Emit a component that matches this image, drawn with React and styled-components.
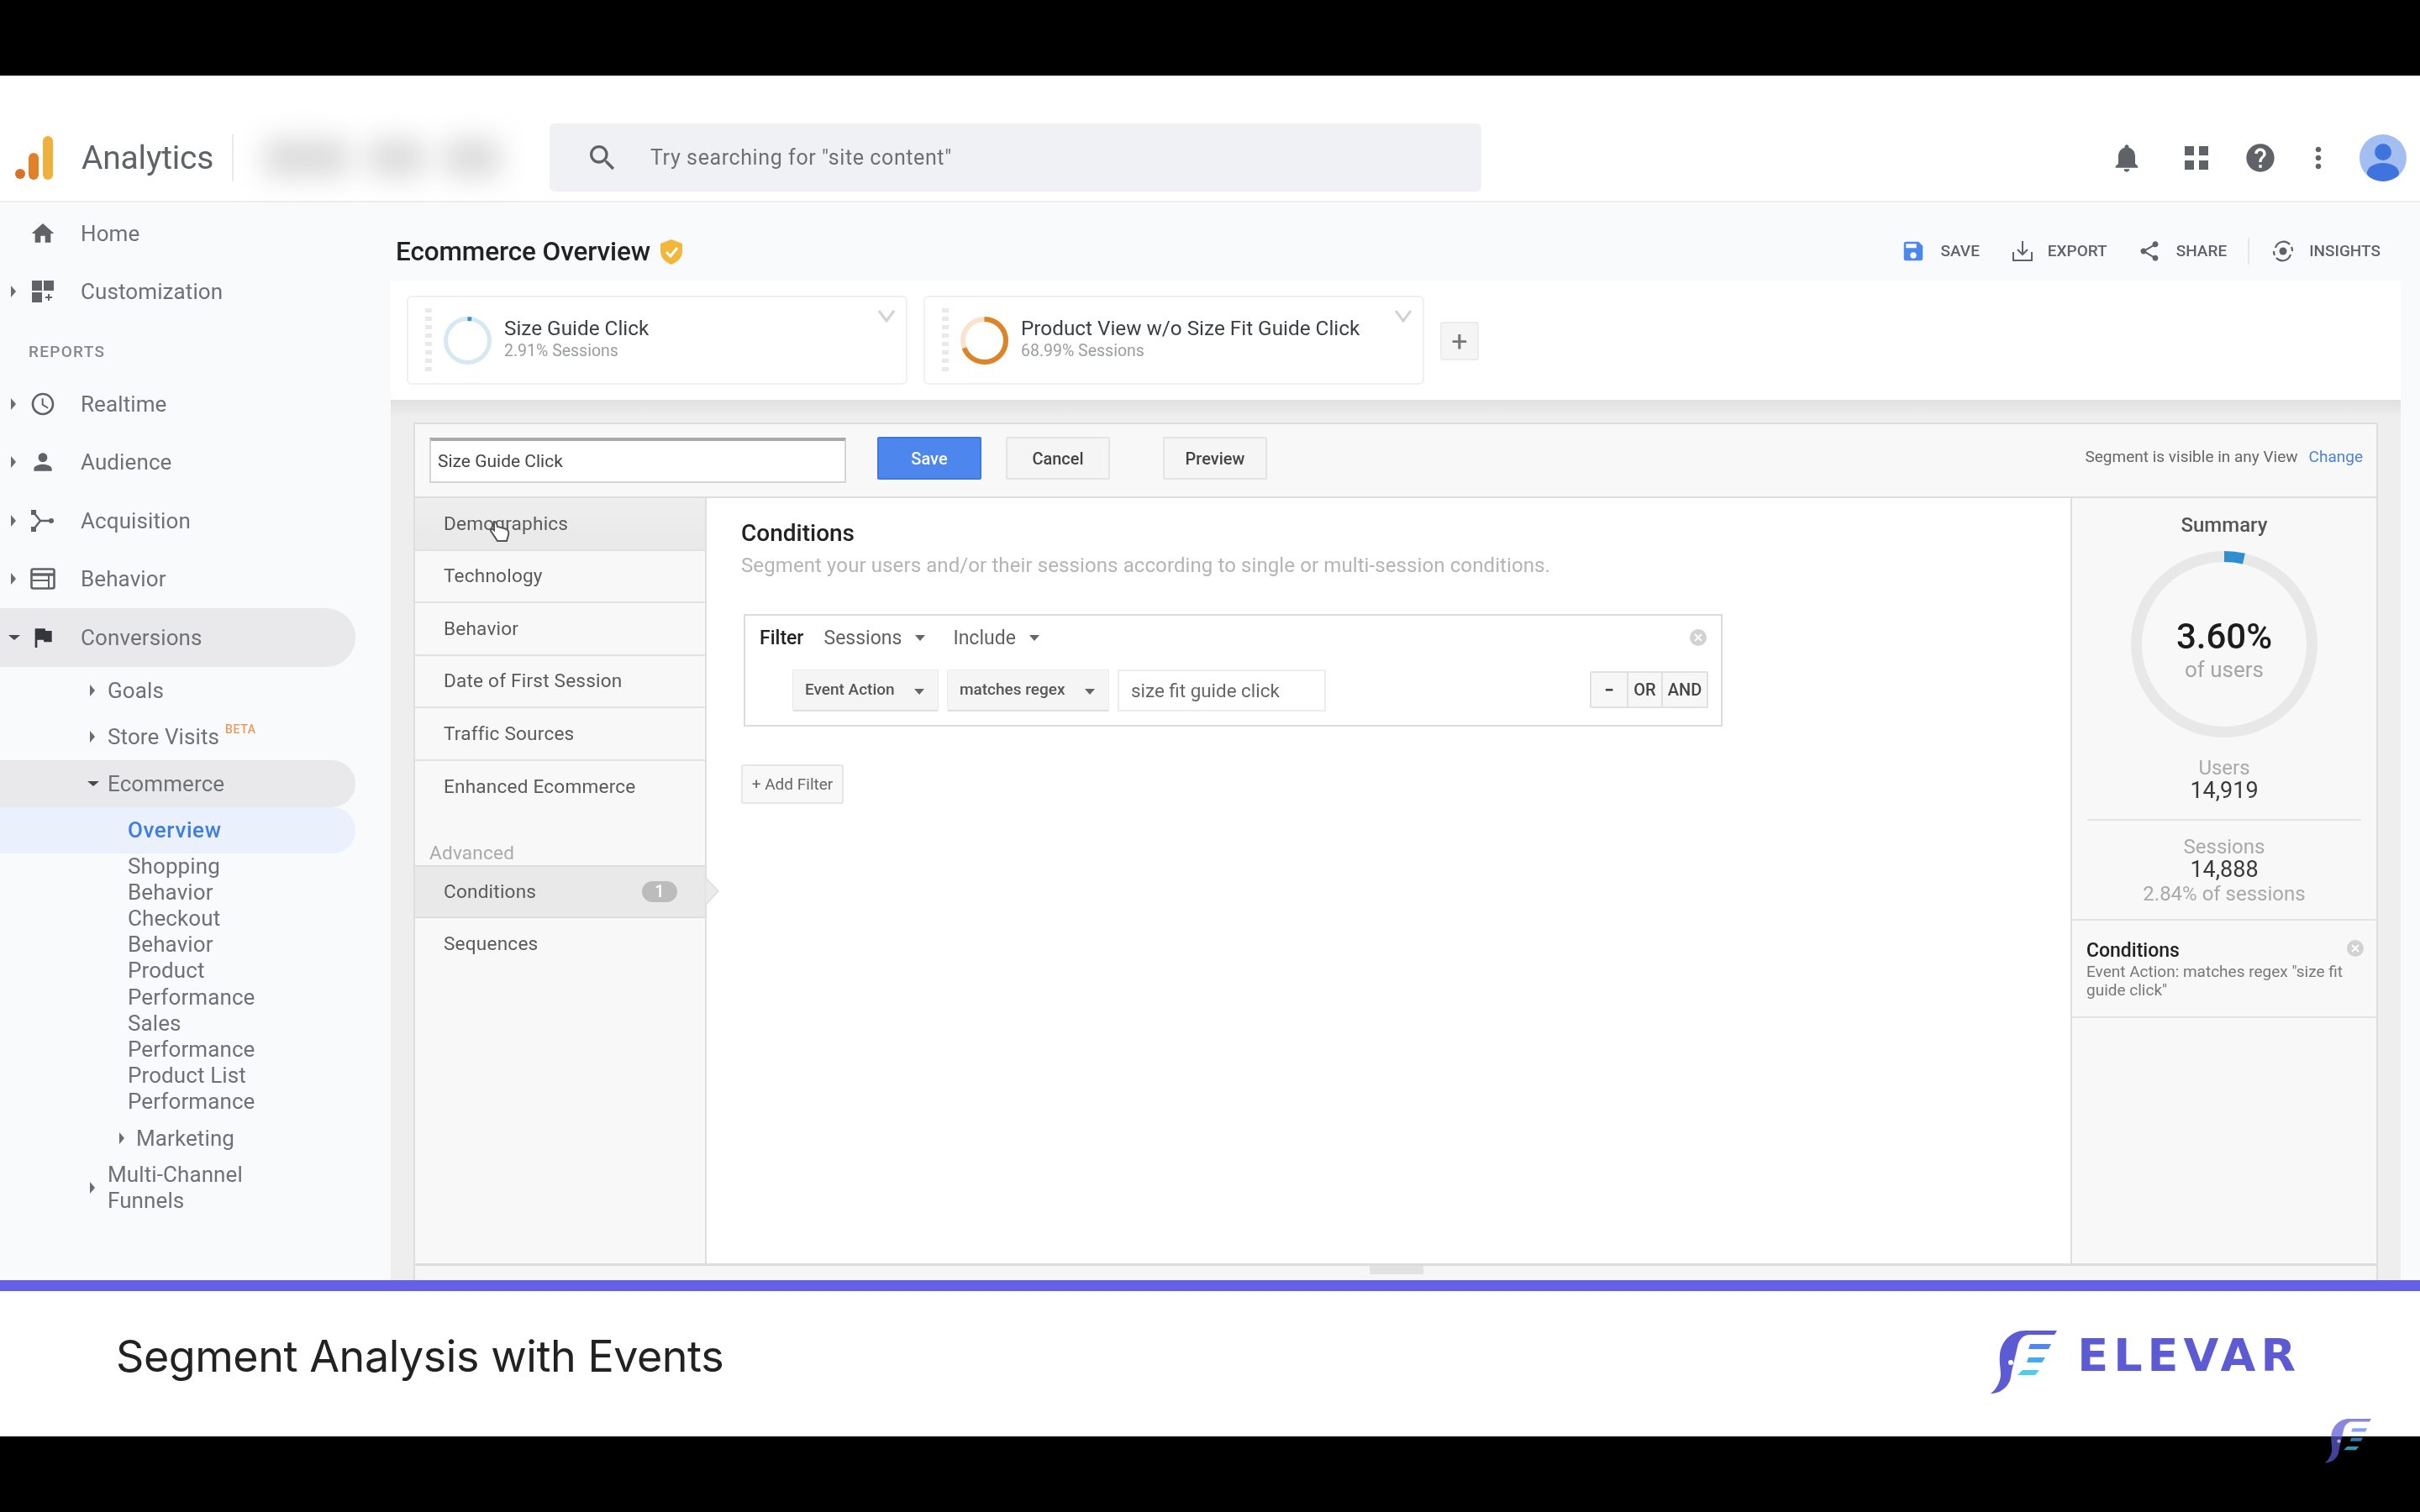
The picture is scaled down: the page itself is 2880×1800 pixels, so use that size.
import React from "react";
import styled, { createGlobalStyle } from "styled-components";
import { MdHome, MdPerson, MdFlag, MdNotifications, MdHelp, MdMoreVert, MdSearch, MdSave, MdShare, MdAccessTime } from "react-icons/md";

const Global = createGlobalStyle`
  html, body { margin: 0; padding: 0; background: #000; }
  * { box-sizing: border-box; }
`;
const Page = styled.div`
  position: relative; width: 2880px; height: 1800px; background: #000; overflow: hidden;
  display: flex; flex-direction: column; font-family: Roboto, "Liberation Sans", sans-serif;
`;
const Band = styled.div`height: 90px; background: #000; flex: none;`;
const Screen = styled.div`flex: none; height: 1434px; display: flex; flex-direction: column; background: #f9fafb; filter: blur(0.6px);`;
const Header = styled.header`
  flex: none; height: 151px; background: #fff; border-bottom: 2px solid #eceef0;
  display: flex; align-items: center; padding: 46px 16px 0 18px;
`;
const BrandName = styled.div`font-size: 39px; color: #5f6368; margin-left: 34px; width: 151px; letter-spacing: -0.2px;`;
const HeadDivider = styled.div`width: 2px; height: 56px; background: #e8eaed; margin-left: 28px;`;
const Redacted = styled.div`
  width: 310px; height: 70px; margin-left: 22px; display: flex; gap: 22px; align-items: center; padding: 0 14px; filter: blur(16px);
`;
const RedactedBlob = styled.div`height: 46px; flex: ${p => p.$grow}; background: #dcdcdc; border-radius: 10px;`;
const Search = styled.div`
  width: 1109px; height: 81px; margin-left: 44px; background: #f0f1f4; border-radius: 6px;
  display: flex; align-items: center; padding-left: 43px; color: #6d7074; font-size: 25px; letter-spacing: .6px;
  svg { font-size: 40px; color: #5f6368; margin-right: 37px; }
`;
const HeadIcons = styled.div`margin-left: auto; display: flex; align-items: center;`;
const HeadIcon = styled.div`
  width: 40px; height: 40px; margin-left: ${p => p.$gap}px; display: flex; align-items: center; justify-content: center; color: #5f6368;
  svg { display: block; }
`;
const Avatar = styled.div`
  width: 56px; height: 56px; margin-left: 29px; border-radius: 50%; background: #a3bff2; overflow: hidden;
  svg { display: block; }
`;
const Body = styled.div`flex: 1; display: flex; min-height: 0;`;
const Sidebar = styled.nav`flex: none; width: 465px; padding-top: 2px; background: #f9fafc; color: #6e7276; font-size: 26px; letter-spacing: .1px;`;
const NavRow = styled.div`
  position: relative; height: 69.5px; display: flex; align-items: center; padding-left: 96px; width: 423px;
  border-radius: 0 35px 35px 0; background: ${p => p.$active ? "#e9e9ec" : "transparent"};
`;
const NavIcon = styled.span`
  position: absolute; left: 35px; width: 32px; height: 32px; display: flex; align-items: center; justify-content: center;
  color: ${p => p.$dark ? "#33363a" : "#5f6368"};
  svg { display: block; }
`;
const Tri = styled.span`
  position: absolute; left: ${p => p.$x}px; width: 0; height: 0;
  ${p => p.$open
    ? "border-left: 7px solid transparent; border-right: 7px solid transparent; border-top: 6px solid #45484c;"
    : "border-top: 7px solid transparent; border-bottom: 7px solid transparent; border-left: 6px solid #6a6d70;"}
`;
const ReportsLabel = styled.div`height: 64px; padding: 25px 0 0 34px; font-size: 19px; font-weight: 500; letter-spacing: 1.3px; color: #85888c; line-height: 24px;`;
const SubRow = styled.div`
  position: relative; height: ${p => p.$h}px; display: flex; align-items: center; padding-left: ${p => p.$pad}px; width: 423px;
  border-radius: 0 28px 28px 0; background: ${p => p.$bg || "transparent"}; color: ${p => p.$color || "inherit"};
  font-weight: ${p => p.$strong ? 500 : 400}; letter-spacing: ${p => p.$strong ? ".6px" : "inherit"};
`;
const Beta = styled.sup`font-size: 14px; color: #e99a5d; font-weight: 500; letter-spacing: .6px; margin-left: 7px; position: relative; top: -9px; line-height: 0; vertical-align: baseline;`;
const Leaves = styled.div`padding-left: 152px; line-height: 31.2px;`;
const Wrapped = styled.div`line-height: 31px;`;
const Main = styled.main`flex: 1; min-width: 0; display: flex; flex-direction: column; padding-right: 23px;`;
const TitleRow = styled.div`height: 93px; flex: none; display: flex; align-items: center; padding: 24px 47px 0 6px; margin-right: -23px;`;
const Title = styled.h1`margin: 0; font-size: 31.5px; font-weight: 500; color: #222; letter-spacing: -.1px;`;
const Badge2 = styled.svg`margin-left: 12px; flex: none;`;
const Actions = styled.div`margin-left: auto; margin-top: -2px; display: flex; align-items: center; color: #5f6368; font-size: 19px; font-weight: 500;`;
const Action = styled.div`
  display: flex; align-items: center; gap: 18px; margin-left: ${p => p.$gap}px;
  svg { display: block; }
`;
const ActionSep = styled.div`width: 2px; height: 32px; background: #e6e7e9; margin-left: 25px;`;
const SegBand = styled.div`flex: none; height: 142px; background: #fff; display: flex; align-items: flex-start; padding: 18px 0 0 19px;`;
const SegCard = styled.div`
  position: relative; width: 596px; height: 106px; margin-right: 19px; background: #fff; border: 2px solid #f0f0f0; border-radius: 6px;
  display: flex; align-items: center; padding-left: 20px;
`;
const Grip = styled.div`width: 8px; height: 76px; background: repeating-linear-gradient(#e9e9e9 0 5px, transparent 5px 10px); margin-right: 14px;`;
const SegText = styled.div`margin-left: 15px; margin-top: -4px;`;
const SegName = styled.div`font-size: 24.3px; color: #3c4043; line-height: 30px;`;
const SegSub = styled.div`font-size: 19.5px; color: #9a9da0; line-height: 24px;`;
const SegChevron = styled.svg`position: absolute; right: 12px; top: 14px;`;
const AddSeg = styled.div`
  width: 46px; height: 46px; margin-top: 31px; background: #f5f5f5; border: 2px solid #ececec; border-radius: 3px;
  display: flex; align-items: center; justify-content: center; font-size: 34px; color: #777; line-height: 1;
`;
const Stage = styled.div`flex: 1; min-height: 0; padding: 27px 27px 0 27px; background: linear-gradient(#e0e0e0 0, #eeeeee 20px, #eeeeee 100%); display: flex;`;
const Panel = styled.div`flex: 1; min-width: 0; background: #f8f8f8; border: 2px solid #dedede; border-bottom: 0; display: flex; flex-direction: column;`;
const PanelTop = styled.div`
  flex: none; height: 88px; border-bottom: 2px solid #dedede; display: flex; align-items: center; padding-left: 17px; padding-right: 16px;
`;
const NameInput = styled.div`
  width: 496px; height: 54px; background: #fff; border: 2px solid #d4d4d4; border-top: 4px solid #a9a9a9; border-radius: 1px;
  display: flex; align-items: center; padding-left: 8px; font-size: 21px; color: #444;
`;
const Btn = styled.div`
  width: ${p => p.$w}px; height: 51px; margin-left: ${p => p.$gap}px; margin-top: -5px; border-radius: 2px; display: flex; align-items: center; justify-content: center;
  font-size: 20px; font-weight: 500; color: ${p => p.$primary ? "#fff" : "#444"};
  background: ${p => p.$primary ? "#4d87ee" : "#f5f5f5"}; border: 2px solid ${p => p.$primary ? "#3f78e0" : "#e4e4e4"};
`;
const Visible = styled.div`margin-left: auto; font-size: 19px; color: #666; margin-top: -9px;`;
const ChangeLink = styled.span`color: #4b83d6; margin-left: 13px;`;
const PanelBody = styled.div`flex: 1; min-height: 0; display: flex;`;
const List = styled.div`position: relative; flex: none; width: 347px; border-right: 2px solid #dedede; font-size: 22.6px; color: #5a5a5a; letter-spacing: .2px;`;
const ListItem = styled.div`
  height: 62.5px; display: flex; align-items: center; padding: 0 35px 0 34px; border-bottom: ${p => p.$plain ? "0" : "2px solid #e2e2e2"};
  background: ${p => p.$hover ? "linear-gradient(#eeeeee,#e9e9e9)" : p.$active ? "#e9e9e9" : "transparent"};
  ${p => p.$active ? "border-top: 2px solid #dedede; border-bottom: 2px solid #dedede;" : ""}
`;
const AdvLabel = styled.div`height: 62px; display: flex; align-items: flex-end; padding: 0 0 1px 17px; color: #aaa;`;
const Badge = styled.span`margin-left: auto; width: 42px; height: 25px; margin-right: -2px; border-radius: 13px; background: #bcbcbc; color: #fff; font-size: 20px; text-align: center; line-height: 25px; font-weight: 500;`;
const ListArrow = styled.svg`position: absolute; right: -18px; top: 451px;`;
const HandCursor = styled.svg`position: absolute; left: 88px; top: 26px;`;
const Center = styled.div`flex: 1; min-width: 0; background: #fff; padding: 27px 0 0 41px;`;
const CondTitle = styled.h2`margin: 0; font-size: 28px; line-height: 30px; font-weight: 500; color: #222;`;
const CondDesc = styled.p`margin: 8px 0 0; font-size: 24px; line-height: 30px; color: #b4b4b4; letter-spacing: .1px;`;
const FilterBox = styled.div`
  width: 1165px; height: 134px; margin-top: 43px; margin-left: 3px; border: 2px solid #dcdcdc; padding: 6px 15px 16px 17px; background: #fff;
`;
const FilterHead = styled.div`height: 40px; display: flex; align-items: center; font-size: 23px; color: #5f6265;`;
const FilterWord = styled.b`font-weight: 500; color: #222; margin-right: 24px;`;
const MenuText = styled.span`display: inline-flex; align-items: center; margin-right: ${p => p.$gap}px;`;
const DownTri = styled.span`width: 0; height: 0; border-left: 6px solid transparent; border-right: 6px solid transparent; border-top: 7px solid #666; margin-left: ${p => p.$gap}px;`;
const CloseDot = styled.svg`margin-left: auto; display: block; flex: none; margin-right: 2px;`;
const FilterLine = styled.div`display: flex; align-items: center; height: 50px; margin: 18px 0 0 39px;`;
const Drop = styled.div`
  width: ${p => p.$w}px; height: 50px; margin-right: 10px; background: #f5f5f5; border: 1px solid #ebebeb; border-bottom: 2px solid #dfdfdf;
  display: flex; align-items: center; padding: 0 0 3px 14px; font-size: 19px; font-weight: 500; color: #555; border-radius: 2px;
`;
const DropLabel = styled.span`flex: 1;`;
const DropCaret = styled(DownTri)`margin: 6px 16px 0 0;`;
const ValueBox = styled.div`
  width: 248px; height: 50px; background: #fff; border: 2px solid #ececec; display: flex; align-items: center; padding-left: 14px; font-size: 22.4px; color: #666;
`;
const OpGroup = styled.div`margin-left: auto; margin-top: -3px; display: flex; height: 44px; border: 2px solid #e0e0e0; border-radius: 2px; background: #f7f7f7; font-size: 20px; font-weight: 500; color: #444;`;
const Op = styled.div`
  width: ${p => p.$w}px; display: flex; align-items: center; justify-content: center; border-left: ${p => p.$first ? "0" : "2px solid #e0e0e0"};
  font-weight: ${p => p.$first ? 900 : 500};
`;
const AddFilter = styled.div`
  width: 122px; height: 47px; margin-top: 45px; background: #f8f8f8; border: 2px solid #e6e6e6; border-radius: 3px; display: flex; align-items: center; justify-content: center; font-size: 19px; color: #666;
`;
const Summary = styled.aside`flex: none; width: 364px; border-left: 2px solid #dedede; text-align: center; color: #a9a9a9; font-size: 24px;`;
const SumTitle = styled.div`padding-top: 16px; line-height: 32px; font-weight: 500; color: #555;`;
const Ring = styled.div`position: relative; width: 222px; height: 222px; margin: 15px auto 0; svg { display: block; }`;
const RingText = styled.div`position: absolute; inset: 0; display: flex; flex-direction: column; align-items: center; justify-content: center; padding-top: 9px;`;
const Pct = styled.div`font-size: 42px; font-weight: 500; color: #1c1c1c; line-height: 50px;`;
const OfUsers = styled.div`font-size: 26px; color: #a5a5a5; line-height: 28px;`;
const Stat = styled.div`line-height: 27px; padding: ${p => p.$pad};`;
const StatValue = styled.div`font-size: 27px; color: #3a3a3a;`;
const StatNote = styled.div`line-height: 30px;`;
const StatRule = styled.div`height: 2px; background: #e4e4e4; margin: 0 18px;`;
const CondCard = styled.div`
  position: relative; text-align: left; border-top: 2px solid #e4e4e4; border-bottom: 2px solid #e4e4e4; padding: 22px 17px 20px; color: #777;
`;
const CondCardTitle = styled.div`font-size: 23px; font-weight: 500; color: #222; line-height: 28px;`;
const CondCardText = styled.div`font-size: 19px; line-height: 22px;`;
const CardClose = styled.svg`position: absolute; right: 15px; top: 23px; display: block;`;
const ScrollStrip = styled.div`flex: none; height: 20px; border-top: 3px solid #dcdcdc; background: #f6f6f6; padding-left: 1136px;`;
const Thumb = styled.div`width: 64px; height: 10px; background: #e2e2e2;`;
const Accent = styled.div`flex: none; height: 13px; background: #6461e6;`;
const Caption = styled.div`
  flex: none; height: 173px; background: #fff; display: flex; align-items: center; justify-content: space-between; padding: 0 148px 0 138px;
`;
const CaptionText = styled.div`font-family: Inter, sans-serif; font-size: 52px; letter-spacing: -.45px; color: #222; margin-top: -18px;`;
const Brand = styled.div`display: flex; align-items: center; gap: 24px; margin-top: -6px; svg { display: block; }`;
const BrandWord = styled.div`font-family: "DejaVu Sans", sans-serif; font-size: 54px; font-weight: 700; letter-spacing: 6px; margin-right: -6px; color: #5d5bd4; line-height: 1; margin-top: -14px;`;
const Watermark = styled.div`position: absolute; left: 2766px; top: 1688px; opacity: .72; svg { display: block; }`;

const Logo = ({ w = 80, h = 76 }) => (
  <svg width={w} height={h} viewBox="0 0 80 76">
    <path d="M80 1 L77 6 L46 6 C38 7 34 14 33 20 L26 50 L25 56 C24 66 14 76 1 76 C7 72 13 62 13 53 C13 45 11 40 12 30 C13 14 26 1 42 1 Z" fill="#5d5bd4" />
    <circle cx="25" cy="39" r="3" fill="#fff" />
    <path d="M48 17 H73 L70 23 H46 Z" fill="#4f86f0" />
    <path d="M46 33 H66 L62 39 H44 Z" fill="#45a9ee" />
    <path d="M39 48 H59 L54 54 H33 Z" fill="#4fcdea" />
  </svg>
);
const Donut = ({ size, sw, pct, color, track }) => {
  const r = (size - sw) / 2, c = 2 * Math.PI * r;
  return (
    <svg width={size} height={size} viewBox={`0 0 ${size} ${size}`}>
      <circle cx={size / 2} cy={size / 2} r={r} fill="none" stroke={track} strokeWidth={sw} />
      <circle cx={size / 2} cy={size / 2} r={r} fill="none" stroke={color} strokeWidth={sw}
        strokeDasharray={`${c * pct} ${c}`} transform={`rotate(-90 ${size / 2} ${size / 2})`} />
    </svg>
  );
};
const Chev = () => (
  <SegChevron width="22" height="16" viewBox="0 0 22 16"><path d="M2 2 L11 14 L20 2" fill="none" stroke="#d2d2d2" strokeWidth="3" /></SegChevron>
);
const X = ({ as: C = CloseDot, size = 20 }) => (
  <C width={size} height={size} viewBox="0 0 20 20">
    <circle cx="10" cy="10" r="10" fill="#d2d2d2" />
    <path d="M6 6 L14 14 M14 6 L6 14" stroke="#fff" strokeWidth="2" />
  </C>
);
const Grid4 = ({ gap = 6, s = 11 }) => (
  <svg width={2 * s + gap} height={2 * s + gap} viewBox={`0 0 ${2 * s + gap} ${2 * s + gap}`} fill="currentColor">
    <rect width={s} height={s} /><rect x={s + gap} width={s} height={s} />
    <rect y={s + gap} width={s} height={s} /><rect x={s + gap} y={s + gap} width={s} height={s} />
  </svg>
);
const CustomIcon = () => (
  <svg width="28" height="28" viewBox="0 0 28 28" fill="currentColor">
    <rect x="1" y="1" width="12" height="12" /><rect x="15" y="1" width="12" height="12" /><rect x="1" y="15" width="12" height="12" />
    <path d="M20 17h2v3h3v2h-3v3h-2v-3h-3v-2h3z" />
  </svg>
);
const AcqIcon = () => (
  <svg width="30" height="28" viewBox="0 0 30 28" fill="none" stroke="currentColor" strokeWidth="2.4">
    <path d="M4 4 L12 14 L4 24 M12 14 H25" />
    <rect x="1" y="1" width="6" height="6" fill="currentColor" stroke="none" />
    <rect x="1" y="21" width="6" height="6" fill="currentColor" stroke="none" />
    <circle cx="25" cy="14" r="3" fill="currentColor" stroke="none" />
  </svg>
);
const BehIcon = () => (
  <svg width="30" height="26" viewBox="0 0 30 26" fill="none" stroke="currentColor">
    <rect x="1.5" y="1.5" width="27" height="23" rx="2" strokeWidth="2.6" />
    <path d="M2 8 H28" strokeWidth="3.4" /><path d="M3 15 H22 M22 9 V24" strokeWidth="2" />
  </svg>
);
const ExportIcon = () => (
  <svg width="24" height="26" viewBox="0 0 24 26" fill="none" stroke="#5f6368" strokeWidth="2">
    <path d="M12 1 V16 M6 11 L12 17 L18 11" /><path d="M1 14 V24 H23 V14" />
  </svg>
);
const InsightIcon = () => (
  <svg width="26" height="26" viewBox="0 0 26 26" fill="none" stroke="#5f6368" strokeWidth="2.2">
    <path d="M4 9 A10 10 0 0 1 21 5" /><path d="M22 17 A10 10 0 0 1 5 21" /><path d="M2 13 A11 11 0 0 0 3 18" /><path d="M24 13 A11 11 0 0 0 23 8" />
    <circle cx="13" cy="13" r="4.5" fill="#5f6368" stroke="none" />
  </svg>
);

const mainNav = [
  ["Realtime", <MdAccessTime size={34} />],
  ["Audience", <MdPerson size={34} />],
  ["Acquisition", <AcqIcon />],
  ["Behavior", <BehIcon />],
];
const leaves = ["Shopping", "Behavior", "Checkout", "Behavior", "Product", "Performance", "Sales", "Performance", "Product List", "Performance"];
const listItems = ["Technology", "Behavior", "Date of First Session", "Traffic Sources"];

export default function App() {
  return (
    <Page>
      <Global />
      <Band />
      <Screen>
        <Header>
          <svg width="45" height="52" viewBox="0 0 45 52">
            <rect x="33" y="0" width="12" height="52" rx="6" fill="#f0b13c" />
            <rect x="16" y="20" width="12" height="32" rx="6" fill="#e0812a" />
            <circle cx="6" cy="45" r="6" fill="#d9702a" />
          </svg>
          <BrandName>Analytics</BrandName>
          <HeadDivider />
          <Redacted><RedactedBlob $grow={3} /><RedactedBlob $grow={2} /><RedactedBlob $grow={2} /></Redacted>
          <Search><MdSearch />Try searching for "site content"</Search>
          <HeadIcons>
            <HeadIcon $gap={0}><MdNotifications size={40} /></HeadIcon>
            <HeadIcon $gap={43}><Grid4 /></HeadIcon>
            <HeadIcon $gap={36}><MdHelp size={40} /></HeadIcon>
            <HeadIcon $gap={29}><MdMoreVert size={40} /></HeadIcon>
            <Avatar>
              <svg width="56" height="56" viewBox="0 0 56 56" fill="#3f73dd">
                <circle cx="28" cy="21" r="10" /><ellipse cx="28" cy="46" rx="19" ry="12" />
              </svg>
            </Avatar>
          </HeadIcons>
        </Header>
        <Body>
          <Sidebar>
            <NavRow><NavIcon><MdHome size={34} /></NavIcon>Home</NavRow>
            <NavRow><Tri $x={13} /><NavIcon><CustomIcon /></NavIcon>Customization</NavRow>
            <ReportsLabel>REPORTS</ReportsLabel>
            {mainNav.map(([label, icon]) => (
              <NavRow key={label}><Tri $x={13} /><NavIcon>{icon}</NavIcon>{label}</NavRow>
            ))}
            <NavRow $active><Tri $x={10} $open /><NavIcon $dark><MdFlag size={34} /></NavIcon>Conversions</NavRow>
            <SubRow $h={56} $pad={128}><Tri $x={107} />Goals</SubRow>
            <SubRow $h={55} $pad={128}><Tri $x={107} />Store Visits<Beta>BETA</Beta></SubRow>
            <SubRow $h={56} $pad={128} $bg="#e9e9ec"><Tri $x={104} $open />Ecommerce</SubRow>
            <SubRow $h={55} $pad={152} $bg="#eaf1fd" $color="#3f7de3" $strong>Overview</SubRow>
            <Leaves>{leaves.map((l, i) => <div key={i}>{l}</div>)}</Leaves>
            <SubRow $h={55} $pad={162}><Tri $x={142} />Marketing</SubRow>
            <SubRow $h={62} $pad={128}><Tri $x={107} /><Wrapped>Multi-Channel<br />Funnels</Wrapped></SubRow>
          </Sidebar>
          <Main>
            <TitleRow>
              <Title>Ecommerce Overview</Title>
              <Badge2 width="26" height="30" viewBox="0 0 26 30">
                <path d="M13 0 L26 5 V14 C26 22 20 27 13 30 C6 27 0 22 0 14 V5 Z" fill="#f0b73a" />
                <path d="M7 15 L12 20 L20 10" fill="none" stroke="#fff" strokeWidth="3" />
              </Badge2>
              <Actions>
                <Action $gap={0}><MdSave size={30} color="#4d87ee" />SAVE</Action>
                <Action $gap={39}><ExportIcon />EXPORT</Action>
                <Action $gap={36}><MdShare size={28} />SHARE</Action>
                <ActionSep />
                <Action $gap={27}><InsightIcon />INSIGHTS</Action>
              </Actions>
            </TitleRow>
            <SegBand>
              <SegCard>
                <Grip />
                <Donut size={57} sw={5} pct={0.0291} color="#3f8fc4" track="#d6e9f2" />
                <SegText><SegName>Size Guide Click</SegName><SegSub>2.91% Sessions</SegSub></SegText>
                <Chev />
              </SegCard>
              <SegCard>
                <Grip />
                <Donut size={57} sw={6} pct={0.6899} color="#dc8428" track="#f8e3cf" />
                <SegText><SegName>Product View w/o Size Fit Guide Click</SegName><SegSub>68.99% Sessions</SegSub></SegText>
                <Chev />
              </SegCard>
              <AddSeg>+</AddSeg>
            </SegBand>
            <Stage>
              <Panel>
                <PanelTop>
                  <NameInput>Size Guide Click</NameInput>
                  <Btn $primary $w={124} $gap={37}>Save</Btn>
                  <Btn $w={124} $gap={29}>Cancel</Btn>
                  <Btn $w={124} $gap={63}>Preview</Btn>
                  <Visible>Segment is visible in any View<ChangeLink>Change</ChangeLink></Visible>
                </PanelTop>
                <PanelBody>
                  <List>
                    <ListItem $hover>Demographics</ListItem>
                    {listItems.map(t => <ListItem key={t}>{t}</ListItem>)}
                    <ListItem $plain>Enhanced Ecommerce</ListItem>
                    <AdvLabel>Advanced</AdvLabel>
                    <ListItem $active>Conditions<Badge>1</Badge></ListItem>
                    <ListItem $plain>Sequences</ListItem>
                    <ListArrow width="18" height="34" viewBox="0 0 18 34"><path d="M0 0 L16 17 L0 34 Z" fill="#ebebeb" stroke="#dedede" strokeWidth="1.5" /></ListArrow>
                    <HandCursor width="26" height="28" viewBox="0 0 26 28">
                      <path d="M6 2 C9 2 9 4 10 8 L18 10 C23 11 24 14 23 18 L21 25 H10 L2 13 C1 11 4 10 6 12 Z" fill="#fff" stroke="#555" strokeWidth="2" />
                    </HandCursor>
                  </List>
                  <Center>
                    <CondTitle>Conditions</CondTitle>
                    <CondDesc>Segment your users and/or their sessions according to single or multi-session conditions.</CondDesc>
                    <FilterBox>
                      <FilterHead>
                        <FilterWord>Filter</FilterWord>
                        <MenuText $gap={33}>Sessions<DownTri $gap={16} /></MenuText>
                        <MenuText $gap={0}>Include<DownTri $gap={16} /></MenuText>
                        <X />
                      </FilterHead>
                      <FilterLine>
                        <Drop $w={174}><DropLabel>Event Action</DropLabel><DropCaret /></Drop>
                        <Drop $w={193}><DropLabel>matches regex</DropLabel><DropCaret /></Drop>
                        <ValueBox>size fit guide click</ValueBox>
                        <OpGroup>
                          <Op $first $w={42}>−</Op><Op $w={41}>OR</Op><Op $w={54}>AND</Op>
                        </OpGroup>
                      </FilterLine>
                    </FilterBox>
                    <AddFilter>+ Add Filter</AddFilter>
                  </Center>
                  <Summary>
                    <SumTitle>Summary</SumTitle>
                    <Ring>
                      <Donut size={222} sw={13} pct={0.036} color="#2f8fce" track="#e8e8e8" />
                      <RingText><Pct>3.60%</Pct><OfUsers>of users</OfUsers></RingText>
                    </Ring>
                    <Stat $pad="23px 0 20px">Users<StatValue>14,919</StatValue></Stat>
                    <StatRule />
                    <Stat $pad="18px 0 15px">Sessions<StatValue>14,888</StatValue><StatNote>2.84% of sessions</StatNote></Stat>
                    <CondCard>
                      <CondCardTitle>Conditions</CondCardTitle>
                      <CondCardText>Event Action: matches regex "size fit guide click"</CondCardText>
                      <X as={CardClose} />
                    </CondCard>
                  </Summary>
                </PanelBody>
                <ScrollStrip><Thumb /></ScrollStrip>
              </Panel>
            </Stage>
          </Main>
        </Body>
      </Screen>
      <Accent />
      <Caption>
        <CaptionText>Segment Analysis with Events</CaptionText>
        <Brand><Logo /><BrandWord>ELEVAR</BrandWord></Brand>
      </Caption>
      <Band />
      <Watermark><Logo w={56} h={54} /></Watermark>
    </Page>
  );
}
